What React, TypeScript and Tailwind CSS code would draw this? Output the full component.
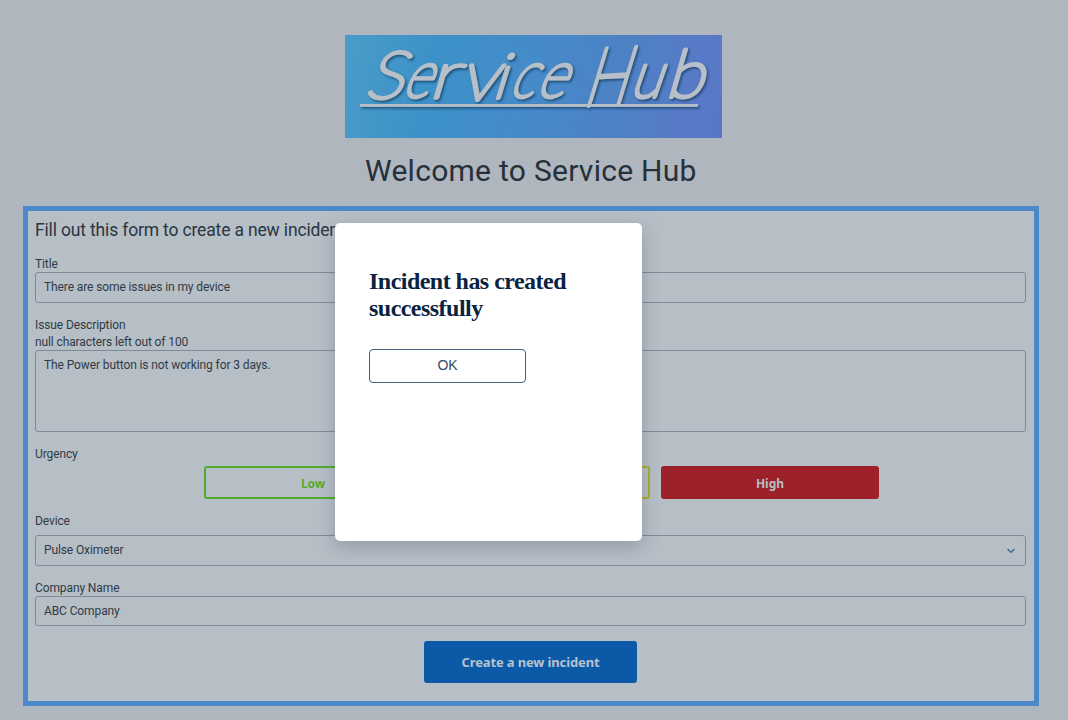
import React from 'react';

const field = 'flex w-full rounded-[3px] border border-[#7f8a99] px-[8px] text-[12px] tracking-[-0.11px]';
const label = 'relative top-px text-[12px] leading-[17px] tracking-[-0.11px]';

const letters = [
  { c: 'S', x: 19, y: 63, size: 65, w: 1.1, skew: -20, turn: 0, stroke: 3.9 },
  { c: 'e', x: 56, y: 62, size: 65, w: 0.82, skew: -24, turn: 0, stroke: 3.9 },
  { c: 'r', x: 83, y: 63, size: 66, w: 1.3, skew: -16, turn: 0, stroke: 3.6 },
  { c: 'v', x: 114, y: 65, size: 71, w: 1.08, skew: -16, turn: 0, stroke: 3.9 },
  { c: 'i', x: 147, y: 63, size: 62, w: 1, skew: -17, turn: 0, stroke: 4.2 },
  { c: 'c', x: 163, y: 62, size: 65, w: 0.82, skew: -24, turn: 0, stroke: 3.9 },
  { c: 'e', x: 190, y: 62, size: 65, w: 0.86, skew: -24, turn: 0, stroke: 3.9 },
  { c: 'H', x: 237, y: 71, size: 80, w: 0.73, skew: -20, turn: -3, stroke: 4.6 },
  { c: 'u', x: 284, y: 62, size: 64, w: 0.9, skew: -19, turn: 0, stroke: 4.1 },
  { c: 'b', x: 320, y: 62, size: 66, w: 1.05, skew: -16, turn: 0, stroke: 4.1 },
];

function Logo() {
  return (
    <svg width="377" height="103" viewBox="0 0 377 103" className="block overflow-visible" role="img" aria-label="Service Hub">
      <defs>
        <linearGradient id="sky" gradientUnits="userSpaceOnUse" x1="0" y1="35" x2="377" y2="110">
          <stop offset="0" stopColor="#499cc8" />
          <stop offset="0.22" stopColor="#3c91c8" />
          <stop offset="0.5" stopColor="#468ac9" />
          <stop offset="0.75" stopColor="#4f80c4" />
          <stop offset="0.9" stopColor="#597ac7" />
          <stop offset="1" stopColor="#5678c4" />
        </linearGradient>
        <filter id="shade" x="-10%" y="-10%" width="120%" height="130%">
          <feDropShadow dx="1.5" dy="1.8" stdDeviation="1.1" floodColor="#163d60" floodOpacity="0.75" />
        </filter>
      </defs>
      <rect width="377" height="103" fill="url(#sky)" />
      <g filter="url(#shade)" fill="#b7bfc9" stroke="#b7bfc9" strokeLinejoin="round" fontFamily="Lato" fontWeight="100">
        {letters.map((l, i) => (
          <text key={i} fontSize={l.size} strokeWidth={l.stroke} transform={`translate(${l.x} ${l.y}) rotate(${l.turn}) skewX(${l.skew}) scale(${l.w} 1)`}>
            {l.c}
          </text>
        ))}
        <rect x="15" y="69" width="338" height="2.8" stroke="none" />
      </g>
    </svg>
  );
}

export default function App() {
  return (
    <div className="relative h-[720px] w-[1068px] overflow-hidden bg-[#afb6be] pt-[35px] font-[Roboto,sans-serif] text-[#303b46]">
      <header className="ml-[345px] w-[377px]">
        <Logo />
        <h1 className="mt-[12px] ml-[20px] text-[30px] leading-[42px] tracking-[0.27px] whitespace-nowrap text-[#25303a]">Welcome to Service Hub</h1>
      </header>
      <main className="mt-[14px] ml-[23px] flex h-[500px] w-[1016px] flex-col border-[5.5px] border-[#4b87c9] bg-[#b6bec6] pt-[6px] pr-[8px] pl-[7px]">
        <h2 className="relative top-px text-[17.5px] leading-[24px] tracking-[-0.16px] text-[#2b3641]">Fill out this form to create a new incident</h2>
        <label className={label + ' mt-[14px]'}>Title</label>
        <div className={field + ' h-[31px] items-center pb-[2px]'}>There are some issues in my device</div>
        <label className={label + ' mt-[13px]'}>Issue Description</label>
        <span className={label}>null characters left out of 100</span>
        <div className={field + ' h-[82px] pt-[5px]'}>The Power button is not working for 3 days.</div>
        <label className={label + ' mt-[13px]'}>Urgency</label>
        <div className="mt-[4px] ml-[169px] flex gap-[11px] font-['Noto_Sans',sans-serif] text-xs font-bold">
          <button className="h-[33px] w-[218px] rounded-[3px] border-2 border-[#52ab2c] pt-[2px] text-[#52ab2c]">Low</button>
          <button className="h-[33px] w-[217px] rounded-[3px] border-2 border-[#abae25] pt-[2px] text-[#abae25]">Medium</button>
          <button className="h-[33px] w-[218px] rounded-[3px] bg-[#9e2029] pt-[2px] text-[#b6bec6]">High</button>
        </div>
        <label className={label + ' mt-[13px]'}>Device</label>
        <div className={field + ' mt-[6px] h-[31px] items-center justify-between pr-[9px] pb-[2px]'}>
          Pulse Oximeter
          <svg width="10" height="10" viewBox="0 0 10 10" fill="none" stroke="#426796" strokeWidth="1.4"><path d="M1.5 4 5 7.2 8.5 4" /></svg>
        </div>
        <label className={label + ' mt-[13px]'}>Company Name</label>
        <div className={field + ' h-[30px] items-center'}>ABC Company</div>
        <button className="mt-[15px] ml-[389px] h-[42px] w-[213px] rounded-[3px] bg-[#0b59a7] pt-px font-['Noto_Sans',sans-serif] text-[13px] font-bold tracking-[-0.14px] text-[#b6c2cf]">Create a new incident</button>
      </main>
      <div role="dialog" className="absolute top-[223px] left-[335px] flex h-[318px] w-[307px] flex-col rounded-[5px] bg-white px-[34px] pt-[45px] shadow-[0_6px_18px_rgba(50,65,90,0.28)]">
        <h2 className="font-['Liberation_Serif',serif] text-[24px] leading-[27px] font-bold tracking-[-0.53px] text-[#0b2342]">Incident has created successfully</h2>
        <button className="mt-[27px] h-[34px] w-[157px] rounded-[4px] border border-[#475e7d] pb-px font-['Liberation_Sans',sans-serif] text-[14px] text-[#354a60]">OK</button>
      </div>
    </div>
  );
}
